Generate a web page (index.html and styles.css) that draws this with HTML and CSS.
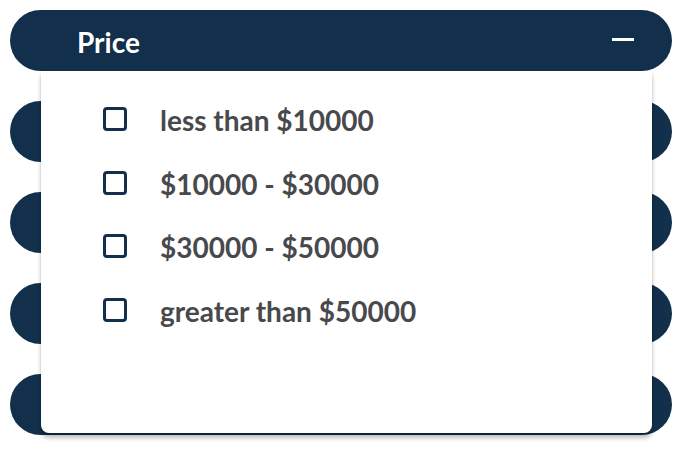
FILE: index.html
```html
<!DOCTYPE html>
<html>
<head>
<meta charset="utf-8">
<link rel="stylesheet" href="styles.css">
</head>
<body>
<div class="accordion">
  <div class="acc-item open">
    <div class="acc-head">
      <span class="acc-title">Price</span>
      <span class="minus"></span>
    </div>
    <div class="panel">
      <label class="opt"><span class="box"></span><span class="opt-text">less than $10000</span></label>
      <label class="opt"><span class="box"></span><span class="opt-text">$10000 - $30000</span></label>
      <label class="opt"><span class="box"></span><span class="opt-text">$30000 - $50000</span></label>
      <label class="opt"><span class="box"></span><span class="opt-text">greater than $50000</span></label>
    </div>
  </div>
  <div class="acc-item"></div>
  <div class="acc-item"></div>
  <div class="acc-item"></div>
  <div class="acc-item"></div>
</div>
</body>
</html>
```
FILE: styles.css
```css
html, body {
  margin: 0;
  background: #ffffff;
}
body {
  padding: 10px;
  font-family: "Lato", "Open Sans", sans-serif;
}
.accordion {
  display: flex;
  flex-direction: column;
  gap: 30px;
}
.acc-item {
  height: 61px;
  border-radius: 31px;
  background: #12304b;
  position: relative;
}
.acc-head {
  height: 61px;
  display: flex;
  align-items: center;
  justify-content: space-between;
  padding: 0 38px 0 67px;
}
.acc-title {
  color: #ffffff;
  font-weight: 700;
  font-size: 28px;
  margin-top: 2px;
}
.minus {
  width: 22px;
  height: 3px;
  background: #ffffff;
  margin-top: -2px;
}
.panel {
  position: absolute;
  z-index: 2;
  left: 31px;
  right: 20px;
  top: 61px;
  height: 362px;
  background: #ffffff;
  border-radius: 0 0 8px 8px;
  box-shadow: 0 5px 4px rgba(0, 0, 0, 0.25), 0 0 3px rgba(0, 0, 0, 0.08);
  padding: 36px 0 0 62px;
  box-sizing: border-box;
  display: flex;
  flex-direction: column;
  gap: 39.5px;
}
.opt {
  display: flex;
  align-items: center;
  height: 24px;
  gap: 33px;
}
.box {
  width: 24px;
  height: 24px;
  box-sizing: border-box;
  border: 3px solid #12304b;
  border-radius: 4px;
  flex: none;
}
.opt-text {
  color: #47494c;
  font-weight: 700;
  font-size: 28px;
  margin-top: 2px;
}
```
